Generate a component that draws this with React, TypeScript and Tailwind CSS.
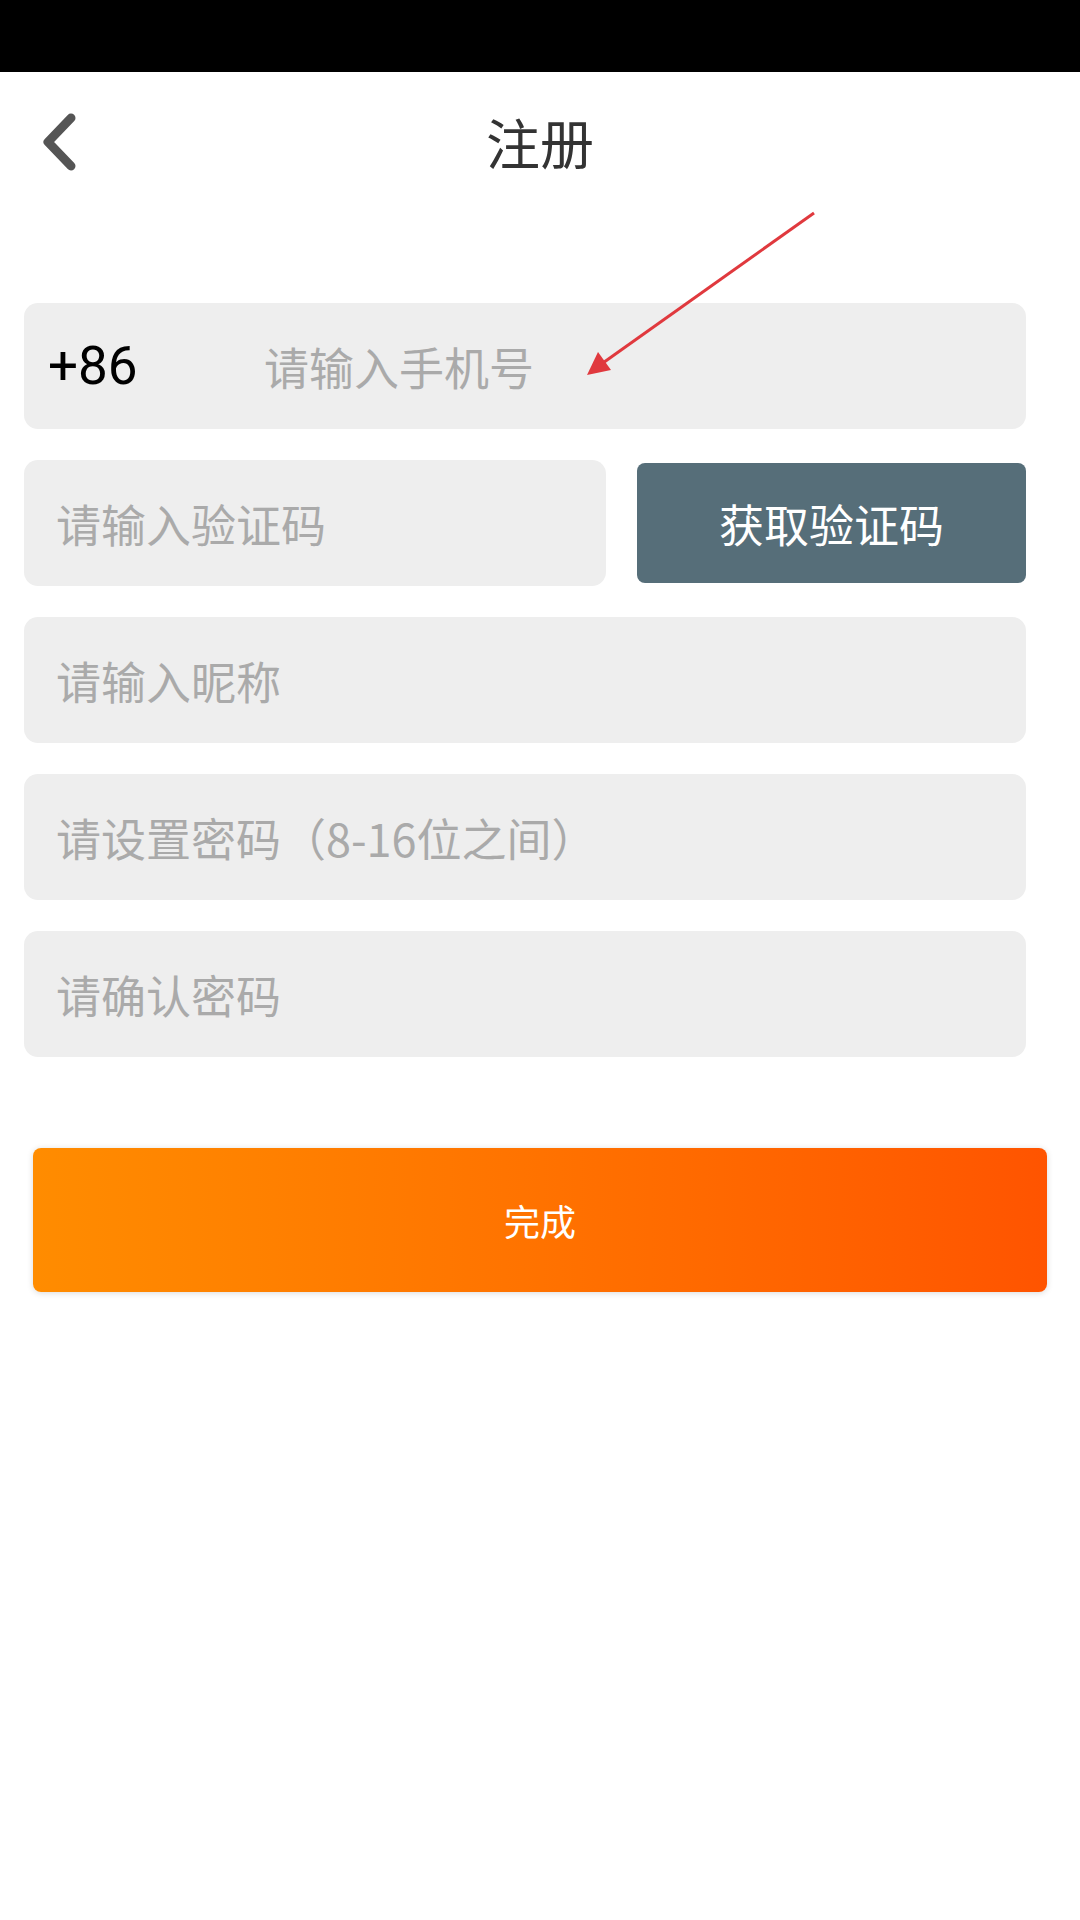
import React from 'react';

const cjk = "font-['Noto_Sans_CJK_SC',sans-serif]";

function Field({ placeholder }: { placeholder: string }) {
  return (
    <div className="h-[126px] w-[1002px] rounded-[14px] bg-[#eeeeee] flex items-center pl-[32px]">
      <span className={`${cjk} text-[45px] text-[#aaaaaa] leading-none`}>{placeholder}</span>
    </div>
  );
}

export default function App() {
  return (
    <div className="relative w-[1080px] h-[1920px] bg-white">
      <div className="h-[72px] bg-black" />

      <header className="relative h-[140px] flex items-center justify-center">
        <button className="absolute left-[38px] top-[40px] w-[44px] h-[60px] flex items-center justify-center">
          <svg width="44" height="60" viewBox="0 0 44 60">
            <path d="M33 6 L10 30 L33 54" fill="none" stroke="#555555" strokeWidth="9" strokeLinecap="round" strokeLinejoin="round" />
          </svg>
        </button>
        <h1 className={`${cjk} text-[54px] text-[#333333] leading-none`}>注册</h1>
      </header>

      <main className="flex flex-col gap-[31px] pl-[24px] pt-[91px]">
        <div className="h-[126px] w-[1002px] rounded-[14px] bg-[#eeeeee] flex items-center pl-[24px]">
          <span className="font-['Roboto',sans-serif] text-[53px] text-black leading-none w-[216px]">+86</span>
          <span className={`${cjk} text-[45px] text-[#aaaaaa] leading-none`}>请输入手机号</span>
        </div>

        <div className="flex items-center w-[1002px] gap-[31px]">
          <div className="h-[126px] w-[582px] rounded-[14px] bg-[#eeeeee] flex items-center pl-[32px]">
            <span className={`${cjk} text-[45px] text-[#aaaaaa] leading-none`}>请输入验证码</span>
          </div>
          <button className="h-[120px] flex-1 rounded-[8px] bg-[#566e79] flex items-center justify-center">
            <span className={`${cjk} text-[45px] text-white leading-none`}>获取验证码</span>
          </button>
        </div>

        <Field placeholder="请输入昵称" />
        <Field placeholder="请设置密码（8-16位之间）" />
        <Field placeholder="请确认密码" />
      </main>

      <div className="pl-[33px] pt-[91px]">
        <button className="h-[144px] w-[1014px] rounded-[8px] bg-gradient-to-r from-[#ff8c00] to-[#ff5400] shadow-[0_1px_6px_rgba(0,0,0,0.15)] flex items-center justify-center">
          <span className={`${cjk} text-[36px] text-white leading-none`}>完成</span>
        </button>
      </div>

      {/* annotation arrow */}
      <svg className="absolute left-0 top-0 pointer-events-none" width="1080" height="420">
        <line x1="814" y1="213" x2="600" y2="365" stroke="#e0393e" strokeWidth="3" />
        <polygon points="587,375 598,352 611,370" fill="#e0393e" />
      </svg>
    </div>
  );
}
